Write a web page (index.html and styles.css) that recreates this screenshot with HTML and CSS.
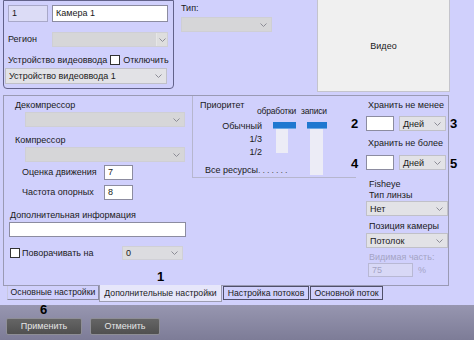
FILE: index.html
```html
<!DOCTYPE html>
<html>
<head>
    <meta charset="UTF-8">
    <title>Камера 1</title>
    <link rel="stylesheet" href="styles.css">
</head>
<body>
<div class="window">

    <div class="top">
        <div class="cam-group">
            <div class="row r1">
                <div class="field id">1</div>
                <div class="field name">Камера 1</div>
            </div>
            <div class="row r2">
                <span class="lbl region-lbl">Регион</span>
                <div class="select dis wide"><span></span><span class="arrow-box"><svg width="7" height="4" viewBox="0 0 7 4"><polyline points="0.5,0.5 3.5,3.5 6.5,0.5"/></svg></span></div>
            </div>
            <div class="row r3">
                <span class="lbl">Устройство видеоввода</span>
                <span class="check"></span>
                <span class="lbl">Отключить</span>
            </div>
            <div class="row r4">
                <div class="select light device"><span>Устройство видеоввода 1</span><svg width="7" height="4" viewBox="0 0 7 4"><polyline points="0.5,0.5 3.5,3.5 6.5,0.5"/></svg></div>
            </div>
        </div>

        <div class="type">
            <div class="lbl">Тип:</div>
            <div class="select dis type-sel"><span></span><svg width="7" height="4" viewBox="0 0 7 4"><polyline points="0.5,0.5 3.5,3.5 6.5,0.5"/></svg></div>
        </div>

        <div class="video">Видео</div>
    </div>

    <div class="main">
        <div class="left-col">
            <div class="lbl cap">Декомпрессор</div>
            <div class="select dis codec"><span></span><svg width="7" height="4" viewBox="0 0 7 4"><polyline points="0.5,0.5 3.5,3.5 6.5,0.5"/></svg></div>
            <div class="lbl cap cap2">Компрессор</div>
            <div class="select dis codec"><span></span><svg width="7" height="4" viewBox="0 0 7 4"><polyline points="0.5,0.5 3.5,3.5 6.5,0.5"/></svg></div>
            <div class="pair p1">
                <span class="lbl">Оценка движения</span>
                <div class="field num">7</div>
            </div>
            <div class="pair p2">
                <span class="lbl">Частота опорных</span>
                <div class="field num">8</div>
            </div>
            <div class="lbl info-lbl">Дополнительная информация</div>
            <div class="field info"></div>
            <div class="rotate">
                <span class="check"></span>
                <span class="lbl">Поворачивать на</span>
                <div class="select dis2 angle"><span>0</span><svg width="7" height="4" viewBox="0 0 7 4"><polyline points="0.5,0.5 3.5,3.5 6.5,0.5"/></svg></div>
            </div>
        </div>

        <div class="prio">
            <div class="prio-labels">
                <div class="lbl prio-title">Приоритет</div>
                <div class="lbl lvl first">Обычный</div>
                <div class="lbl lvl">1/3</div>
                <div class="lbl lvl">1/2</div>
                <div class="lbl all">Все ресурсы<span class="dots">.......</span></div>
            </div>
            <div class="slider s-proc">
                <div class="lbl">обработки</div>
                <div class="thumb"></div>
                <div class="track"></div>
            </div>
            <div class="slider s-rec">
                <div class="lbl">записи</div>
                <div class="thumb"></div>
                <div class="track"></div>
            </div>
        </div>

        <div class="right-col">
            <div class="lbl keep">Хранить не менее</div>
            <div class="keep-row">
                <div class="field days"></div>
                <div class="select light unit"><span>Дней</span><svg width="7" height="4" viewBox="0 0 7 4"><polyline points="0.5,0.5 3.5,3.5 6.5,0.5"/></svg></div>
            </div>
            <div class="lbl keep keep2">Хранить не более</div>
            <div class="keep-row kr2">
                <div class="field days"></div>
                <div class="select light unit"><span>Дней</span><svg width="7" height="4" viewBox="0 0 7 4"><polyline points="0.5,0.5 3.5,3.5 6.5,0.5"/></svg></div>
            </div>
            <div class="lbl fish">Fisheye</div>
            <div class="lbl fish-sub">Тип линзы</div>
            <div class="select light lens"><span>Нет</span><svg width="7" height="4" viewBox="0 0 7 4"><polyline points="0.5,0.5 3.5,3.5 6.5,0.5"/></svg></div>
            <div class="lbl fish-sub pos">Позиция камеры</div>
            <div class="select light lens pos-sel"><span>Потолок</span><svg width="7" height="4" viewBox="0 0 7 4"><polyline points="0.5,0.5 3.5,3.5 6.5,0.5"/></svg></div>
            <div class="lbl muted visible">Видимая часть:</div>
            <div class="part">
                <div class="field dis-field">75</div>
                <span class="lbl muted">%</span>
            </div>
        </div>
    </div>

    <div class="tabs">
        <div class="tab">Основные настройки</div>
        <div class="tab active">Дополнительные настройки</div>
        <div class="tab boxed">Настройка потоков</div>
        <div class="tab boxed">Основной поток</div>
    </div>

    <div class="bar">
        <div class="btn">Применить</div>
        <div class="btn">Отменить</div>
    </div>

    <span class="callout c1">1</span>
    <span class="callout c2">2</span>
    <span class="callout c3">3</span>
    <span class="callout c4">4</span>
    <span class="callout c5">5</span>
    <span class="callout c6">6</span>
</div>
</body>
</html>
```

FILE: styles.css
```css
/* base */
*, *:after, *:before {
    box-sizing: border-box;
    margin: 0;
    padding: 0;
}

html, body {
    width: 474px;
    height: 340px;
    overflow: hidden;
}

body {
    background: #d0d0fc;
    color: #1a1a1a;
    font-family: "Liberation Sans", Arial, sans-serif;
    font-size: 9px;
}

.window {
    position: relative;
    height: 340px;
}

.lbl {
    line-height: 11px;
    white-space: nowrap;
}

.muted {
    color: #a4a4c4;
}

/* fields */
.field {
    height: 15px;
    line-height: 13px;
    padding: 0 3px;
    background: #fff;
    border: 1px solid #8c8ca0;
}

.select {
    display: flex;
    align-items: center;
    justify-content: space-between;
    height: 15px;
    padding: 0 4px 0 3px;
    border: 1px solid #c0c0c8;
}
    .select svg {
        fill: none;
        stroke: #8c8c96;
        stroke-width: 1;
    }

.select.light { background: #e2e2e6; }
.select.dis { background: #d6d6d8; border-color: #cfcfd4; }
.select.dis2 { background: #dcdce0; border-color: #d0d0d6; }

.arrow-box {
    display: flex;
    align-items: center;
    justify-content: center;
    width: 11px;
    height: 13px;
    margin-right: -3px;
    background: #dedede;
    border-left: 1px solid #e6e6e6;
}

.check {
    display: inline-block;
    width: 10px;
    height: 10px;
    background: #fff;
    border: 1px solid #333;
}

/* top part */
.top {
    display: flex;
    align-items: flex-start;
    height: 95px;
}

.cam-group {
    width: 171px;
    height: 89px;
    margin-left: 3px;
    padding: 4px 0 0 1px;
    border: 1px solid #62628a;
    border-radius: 0 0 4px 4px;
}
    .cam-group .row {
        display: flex;
        align-items: center;
    }
    .r1 { margin-left: 3px; height: 17px; }
    .r1 .field { height: 17px; line-height: 15px; }
    .r1 .id { width: 40px; background: #dcdcf6; border-color: #a8a8c8; }
    .r1 .name { width: 116px; margin-left: 4px; }
    .r2 { margin: 10px 0 0 3px; }
    .region-lbl { width: 44px; }
    .wide { width: 116px; padding-right: 3px; }
    .r3 { margin: 7px 0 0 3px; height: 12px; }
    .r3 .check { margin: 0 3px 0 3px; }
    .r4 { margin-top: 2px; }
    .device { width: 162px; height: 16px; }

.type {
    margin-left: 7px;
    padding-top: 3px;
}
    .type-sel {
        width: 91px;
        margin-top: 3px;
        background: #dadadc;
    }

.video {
    display: flex;
    align-items: center;
    justify-content: center;
    width: 133px;
    height: 92px;
    margin: 0 24px 0 auto;
    background: #f0f0f0;
    border: 1px solid #c4c4cc;
    border-top: none;
}

/* main panel */
.main {
    display: flex;
    width: 446px;
    height: 191px;
    margin-left: 3px;
    border: 1px solid #9a9ab4;
}

.left-col {
    width: 188px;
    padding-left: 6px;
}
    .cap { margin: 4px 0 0 5px; }
    .cap2 { margin-top: 8px; }
    .codec { width: 160px; margin-left: 15px; margin-top: 1px; }
    .pair {
        display: flex;
        align-items: center;
        margin-left: 12px;
    }
    .pair .lbl { width: 82px; }
    .num { width: 29px; }
    .p1 { margin-top: 3px; }
    .p2 { margin-top: 5px; }
    .info-lbl { margin-top: 10px; }
    .info { width: 177px; margin: 1px 0 0 -1px; }
    .rotate {
        display: flex;
        align-items: center;
        margin-top: 9px;
    }
    .rotate .lbl { width: 100px; margin-left: 2px; }
    .angle { width: 61px; height: 14px; }

.prio {
    display: flex;
    width: 164px;
    height: 82px;
    border-left: 1px solid #b6b6ce;
    border-bottom: 1px solid #b6b6ce;
}
    .prio-labels {
        width: 69px;
        padding: 4px 0 0 7px;
        text-align: right;
    }
    .prio-title { text-align: left; }
    .lvl { line-height: 10px; margin-top: 3px; }
    .lvl.first { margin-top: 10px; }
    .all {
        text-align: left;
        line-height: 10px;
        margin: 8px 0 0 5px;
    }
    .dots {
        letter-spacing: 2px;
        color: #555;
    }

.slider {
    padding-top: 10px;
}
    .slider .lbl {
        line-height: 10px;
        font-size: 8.5px;
        letter-spacing: -0.2px;
    }
    .thumb {
        height: 7px;
        margin-top: 6px;
        background: #1f78d0;
        border-bottom: 1px solid #6ea8e2;
    }
    .track { background: #ececf6; }
    .s-proc { width: 44px; margin-left: -5px; }
    .s-proc .thumb { width: 23px; margin-left: 16px; }
    .s-proc .track { width: 12px; height: 24px; margin-left: 19px; }
    .s-rec .thumb { width: 20px; margin-left: 6px; }
    .s-rec .track { width: 13px; height: 46px; margin-left: 9px; }

.right-col {
    margin-left: auto;
    width: 82px;
    padding-top: 4px;
}
    .keep { margin-left: 2px; }
    .keep2 { margin-top: 7px; }
    .keep-row {
        display: flex;
        margin-top: 5px;
    }
    .kr2 { margin-top: 6px; }
    .days { width: 28px; }
    .unit { width: 47px; margin-left: 5px; }
    .fish { margin: 9px 0 0 3px; }
    .fish-sub { margin-left: 3px; }
    .lens { width: 82px; }
    .pos { margin-top: 5px; }
    .pos-sel { margin-top: 1px; }
    .visible { margin: 4px 0 0 3px; }
    .part {
        display: flex;
        align-items: center;
        margin-left: 2px;
    }
    .dis-field {
        width: 45px;
        height: 14px;
        line-height: 12px;
        color: #a4a4c4;
        background: #d8d8f6;
        border-color: #b8b8d4;
    }
    .part .lbl { margin-left: 5px; }

/* tabs */
.tabs {
    display: flex;
    align-items: flex-start;
    margin-left: 7px;
    height: 19px;
}
    .tab {
        height: 14px;
        line-height: 12px;
        text-align: center;
        white-space: nowrap;
        font-size: 8.7px;
        border: 1px solid #8a8aa0;
        border-top: none;
        border-left-color: #c8c8e0;
    }
    .tab:nth-child(1) { width: 92px; }
    .tab.active {
        width: 123px;
        height: 17px;
        margin-top: -1px;
        line-height: 16px;
        background: #e6e6fa;
        border-color: #9c9cb0;
    }
    .tab.boxed {
        margin-left: 1px;
        border-color: #50506a;
        border-top: 1px solid #50506a;
    }
    .tab:nth-child(3) { width: 86px; }
    .tab:nth-child(4) { width: 73px; }

/* bottom bar */
.bar {
    display: flex;
    gap: 8px;
    height: 35px;
    padding: 13px 0 0 6px;
    background: linear-gradient(#9796b0, #7d7c97);
}
    .btn {
        width: 76px;
        height: 17px;
        line-height: 15px;
        text-align: center;
        color: #e6e6e6;
        background: linear-gradient(#656565, #505050);
        border: 1px solid #8e8e96;
        border-radius: 2px;
    }
    .btn + .btn { width: 70px; }

/* callouts */
.callout {
    position: absolute;
    font-size: 13px;
    font-weight: bold;
    line-height: 13px;
    color: #000;
}
.c1 { left: 157px; top: 270px; }
.c2 { left: 351px; top: 117px; }
.c3 { left: 450px; top: 117px; }
.c4 { left: 351px; top: 157px; }
.c5 { left: 450px; top: 157px; }
.c6 { left: 40px; top: 303px; }
```
